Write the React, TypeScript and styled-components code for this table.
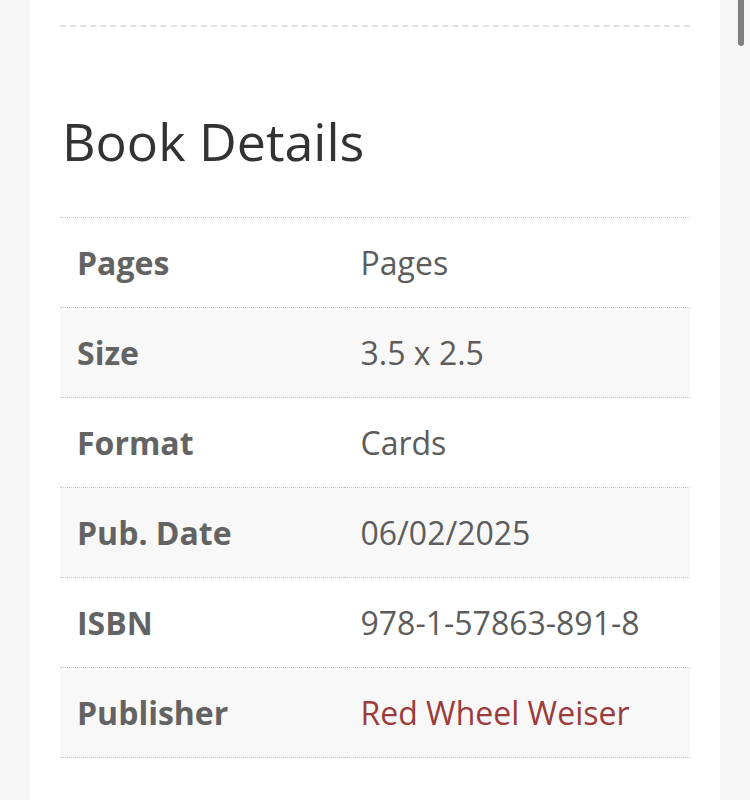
import styled, { createGlobalStyle } from "styled-components";

const GlobalStyle = createGlobalStyle`
  html, body {
    margin: 0;
    padding: 0;
    background: #f5f5f5;
    font-family: "Open Sans", "Liberation Sans", sans-serif;
    overflow: hidden;
  }
`;

const Page = styled.div`
  height: 800px;
  padding: 0 30px;
  box-sizing: border-box;
`;

const Card = styled.div`
  background: #ffffff;
  height: 100%;
  padding: 25px 30px 0;
  box-sizing: border-box;
`;

const Divider = styled.div`
  border-top: 2px dashed #e2e2e2;
`;

const Title = styled.h2`
  margin: 80px 0 43px 2px;
  font-size: 52px;
  line-height: 67px;
  font-weight: 400;
  color: #333333;
`;

const Table = styled.table`
  width: 100%;
  border-collapse: collapse;
  border-top: 1px dotted #c8c8c8;
`;

const Row = styled.tr<{ $shaded: boolean }>`
  background: ${(p) => (p.$shaded ? "#f8f8f8" : "#ffffff")};
  border-bottom: 1px dotted #c8c8c8;
`;

const Label = styled.th`
  width: 45%;
  text-align: left;
  padding: 22px 17px;
  font-size: 32px;
  line-height: 45px;
  font-weight: 700;
  color: #636363;
`;

const Value = styled.td`
  padding: 22px 17px;
  font-size: 32px;
  line-height: 45px;
  color: #5c5c5c;
`;

const PublisherLink = styled.a`
  color: #9c3b3b;
  text-decoration: none;
`;

const Scrollbar = styled.div`
  position: fixed;
  top: 0;
  right: 6px;
  width: 6px;
  height: 46px;
  border-radius: 0 0 3px 3px;
  background: #808080;
`;

const details: { label: string; value: string; link?: boolean }[] = [
  { label: "Pages", value: "Pages" },
  { label: "Size", value: "3.5 x 2.5" },
  { label: "Format", value: "Cards" },
  { label: "Pub. Date", value: "06/02/2025" },
  { label: "ISBN", value: "978-1-57863-891-8" },
  { label: "Publisher", value: "Red Wheel Weiser", link: true },
];

export default function App() {
  return (
    <>
      <GlobalStyle />
      <Page>
        <Card>
          <Divider />
          <Title>Book Details</Title>
          <Table>
            <tbody>
              {details.map((d, i) => (
                <Row key={d.label} $shaded={i % 2 === 1}>
                  <Label>{d.label}</Label>
                  <Value>
                    {d.link ? (
                      <PublisherLink href="#">{d.value}</PublisherLink>
                    ) : (
                      d.value
                    )}
                  </Value>
                </Row>
              ))}
            </tbody>
          </Table>
        </Card>
      </Page>
      <Scrollbar />
    </>
  );
}
